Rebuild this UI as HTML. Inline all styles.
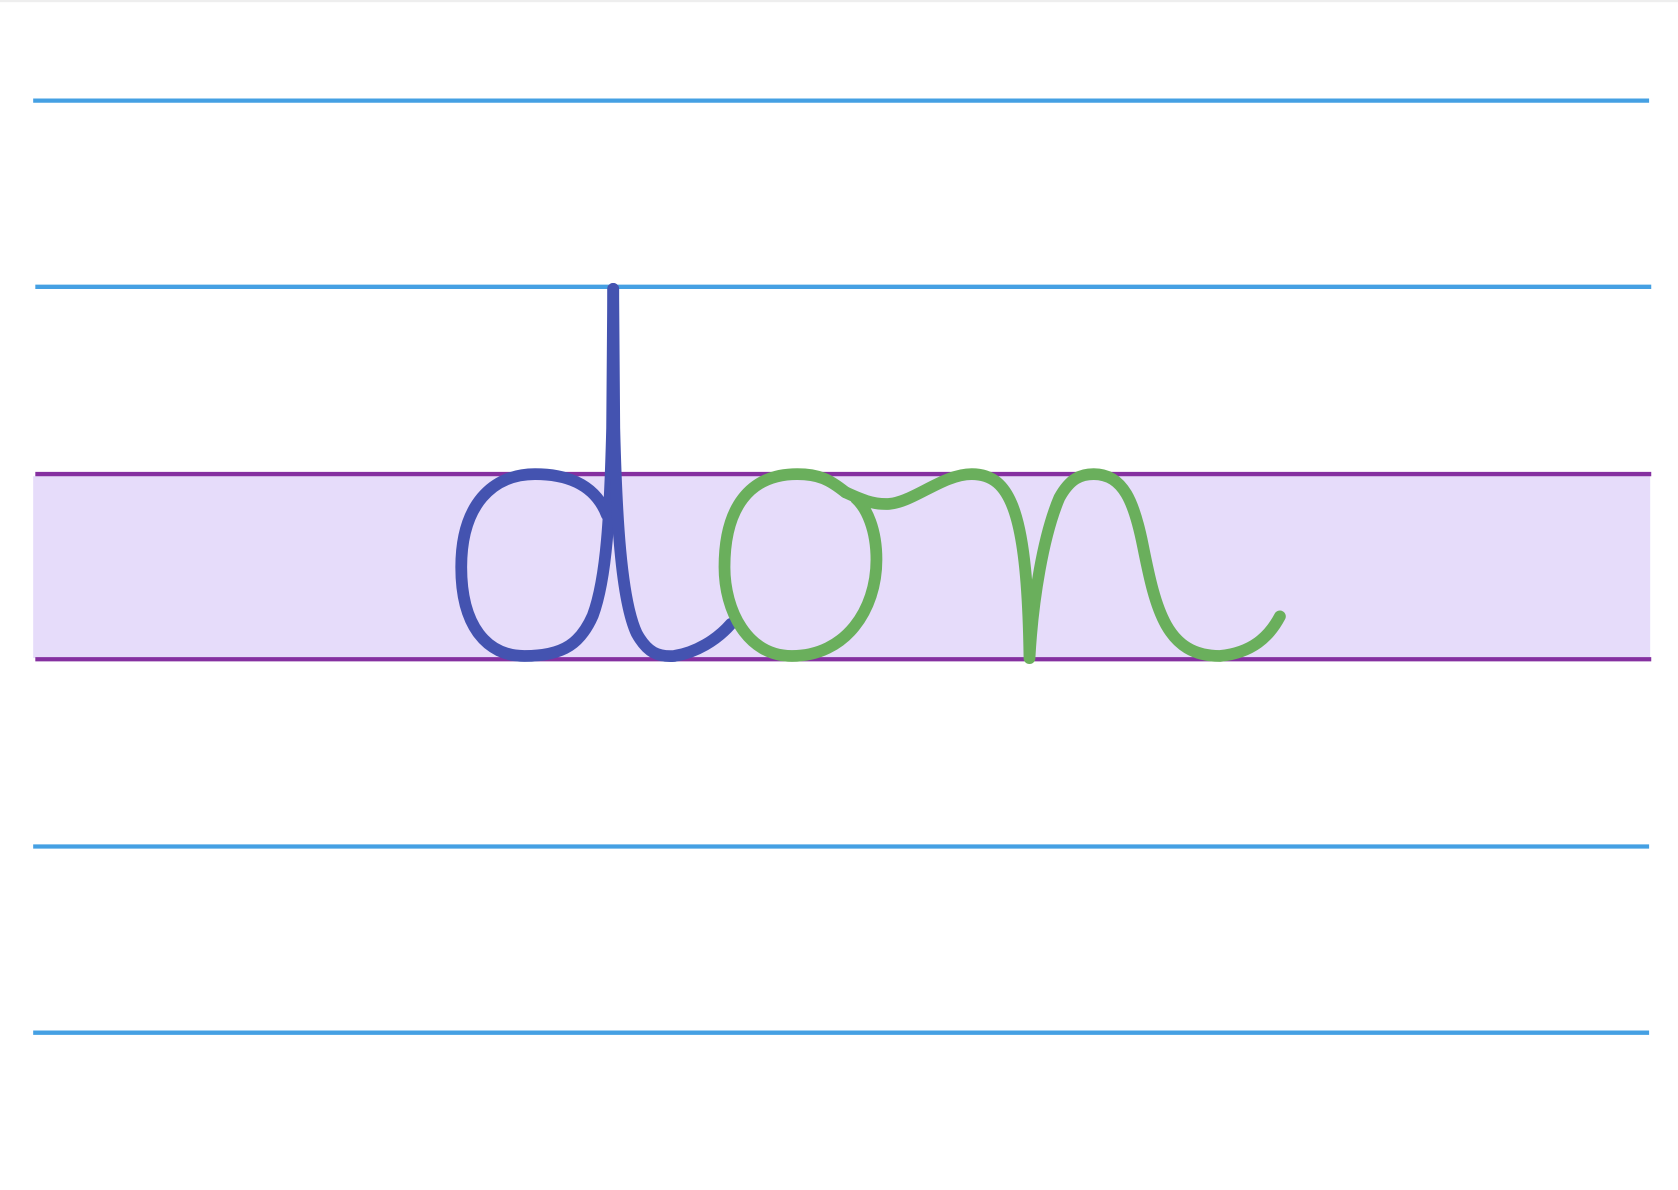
<!DOCTYPE html>
<html><head><meta charset="utf-8"><style>
html,body{margin:0;padding:0;background:#fff;width:1678px;height:1190px;overflow:hidden}
svg{display:block}
</style></head><body>
<svg width="1678" height="1190" viewBox="0 0 1568 1112" preserveAspectRatio="none">
<rect x="0" y="0" width="1568" height="2" fill="#eeeeee"/>
<rect x="31" y="445" width="1511" height="170" fill="#e6dcfa"/>
<g stroke-width="4">
<line x1="31" y1="94" x2="1541" y2="94" stroke="#45a0e3"/>
<line x1="33" y1="268" x2="1543" y2="268" stroke="#45a0e3"/>
<line x1="33" y1="443" x2="1543" y2="443" stroke="#8530a0"/>
<line x1="33" y1="616" x2="1543" y2="616" stroke="#8530a0"/>
<line x1="31" y1="791" x2="1541" y2="791" stroke="#45a0e3"/>
<line x1="31" y1="965" x2="1541" y2="965" stroke="#45a0e3"/>
</g>
<g fill="none" stroke-width="11" stroke-linecap="round" stroke-linejoin="round">
<path stroke="#4453b0" d="M567,481 C555,450 525,443 500,443 C460,443 431,472 431,530 C431,585 455,613 490,613 C528,613 543,600 554,575 C567,540 570,480 572,400 L573,270"/>
<path stroke="#4453b0" d="M573,270 L574,400 C576,480 580,560 595,592 C605,610 615,614 630,613 C650,610 670,598 683,583"/>
<path stroke="#6aaf5c" d="M790,460 C775,448 765,443 745,443 C700,443 677,475 677,530 C677,570 698,613 740,613 C790,613 819,570 819,523 C819,495 810,475 800,466"/>
<path stroke="#6aaf5c" d="M790,460 C805,467 815,471 828,471 C852,471 880,443 908,443 C945,443 960,480 962,615 C965,560 975,500 990,465 C1000,447 1010,443 1022,443 C1050,443 1060,470 1068,510 C1080,570 1090,613 1140,613 C1170,610 1186,595 1196,576"/>
</g>
</svg>
</body></html>
